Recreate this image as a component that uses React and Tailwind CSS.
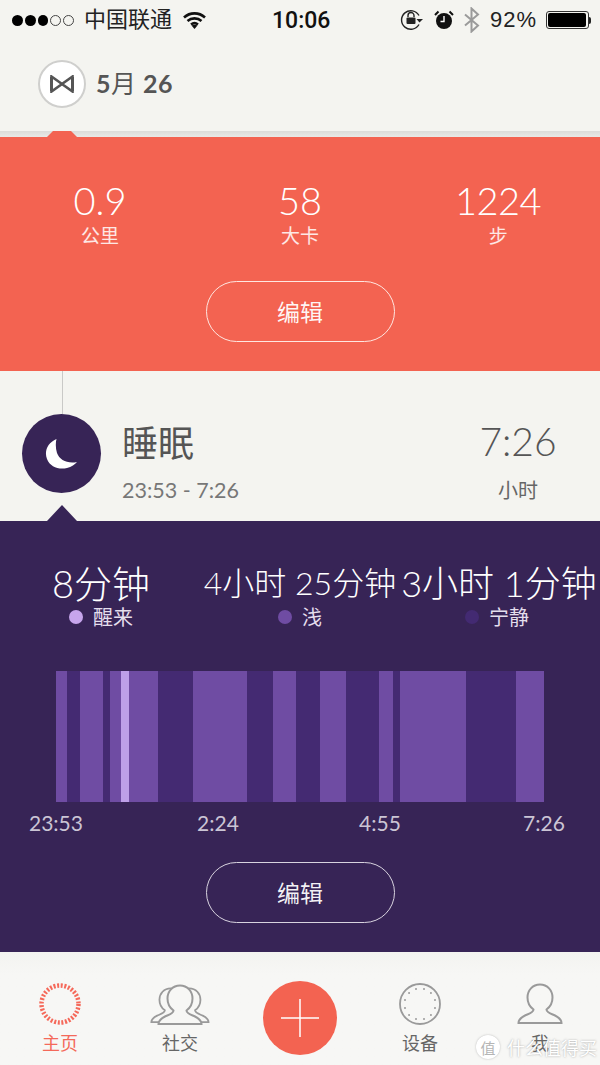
const LATIN = "font-['Lato','Noto_Sans_CJK_SC',sans-serif] font-light";

const segments = [
  { w: "w-[11px]", c: "bg-[#6f4ca3]" },
  { w: "w-[13px]", c: "bg-[#442a72]" },
  { w: "w-[23px]", c: "bg-[#6f4ca3]" },
  { w: "w-[7px]", c: "bg-[#442a72]" },
  { w: "w-[11px]", c: "bg-[#6f4ca3]" },
  { w: "w-[8px]", c: "bg-[#bd9fe8]" },
  { w: "w-[29px]", c: "bg-[#6f4ca3]" },
  { w: "w-[35px]", c: "bg-[#442a72]" },
  { w: "w-[54px]", c: "bg-[#6f4ca3]" },
  { w: "w-[26px]", c: "bg-[#442a72]" },
  { w: "w-[23px]", c: "bg-[#6f4ca3]" },
  { w: "w-[24px]", c: "bg-[#442a72]" },
  { w: "w-[26px]", c: "bg-[#6f4ca3]" },
  { w: "w-[33px]", c: "bg-[#442a72]" },
  { w: "w-[14px]", c: "bg-[#6f4ca3]" },
  { w: "w-[7px]", c: "bg-[#442a72]" },
  { w: "w-[66px]", c: "bg-[#6f4ca3]" },
  { w: "w-[50px]", c: "bg-[#442a72]" },
  { w: "w-[28px]", c: "bg-[#6f4ca3]" },
];

function StatusBar() {
  return (
    <div className="flex h-[40px] items-center text-[22px] text-[#222] font-['Liberation_Sans','Noto_Sans_CJK_SC',sans-serif]">
      <div className="ml-[12px] flex w-[62px] gap-[2px]">
        {[0, 1, 2].map((i) => (
          <span key={i} className="h-[11px] w-[11px] rounded-full bg-black" />
        ))}
        {[3, 4].map((i) => (
          <span key={i} className="h-[11px] w-[11px] rounded-full border border-[#444]" />
        ))}
      </div>
      <span className="ml-[10px] w-[88px] whitespace-nowrap leading-none">中国联通</span>
      <svg className="ml-[11px]" width="23" height="18" viewBox="0 0 23 18" fill="none" stroke="#111" strokeWidth="2.6">
        <path d="M1 6.5C7 1 16 1 22 6.5" />
        <path d="M4.5 10C8.5 6.5 14.5 6.5 18.5 10" />
        <path d="M8 13.5C10 12 13 12 15 13.5" />
        <path d="M11.5 18l-3-3.4c2-1.2 4-1.2 6 0z" fill="#111" stroke="none" />
      </svg>
      <span className="ml-[66px] w-[56px] text-[23px] font-medium leading-none text-[#111] font-['Roboto',sans-serif]">10:06</span>
      <svg className="ml-[72px]" width="23" height="22" viewBox="0 0 23 22" fill="none" stroke="#222" strokeWidth="1.4">
        <path d="M19 6.5A9.3 9.3 0 1 0 19 15.5" />
        <path d="M23 10l-3.500 3.500L16.500 10z" fill="#222" stroke="none" />
        <path d="M8 8V6.500a3 3 0 0 1 6 0V8" />
        <rect x="6.500" y="8.500" width="9" height="6.500" rx="1" fill="#222" stroke="none" />
      </svg>
      <svg className="ml-[11px]" width="20" height="20" viewBox="0 0 20 20">
        <circle cx="10" cy="11" r="8" fill="#111" />
        <path d="M10 6v5.500H6.500" fill="none" stroke="#fff" strokeWidth="1.4" />
        <path d="M1 5l3.500-3.500M19 5l-3.500-3.500" stroke="#111" strokeWidth="2" />
      </svg>
      <svg className="ml-[10px]" width="16" height="26" viewBox="0 0 16 26" fill="none" stroke="#9a9a9a" strokeWidth="2">
        <path d="M1 7.500l13 11-6.500 6V1.500l6.500 6-13 11" />
      </svg>
      <span className="ml-[10px] w-[48px] whitespace-nowrap leading-none tracking-[1px]">92%</span>
      <div className="ml-[8px] flex items-center">
        <div className="h-[18px] w-[43px] rounded-[3px] border border-[#333] p-[1px]">
          <div className="h-full w-[38px] rounded-[2px] bg-black" />
        </div>
        <span className="h-[7px] w-[2px] rounded-r-[2px] bg-[#222]" />
      </div>
    </div>
  );
}

function EditButton({ border }) {
  return (
    <button className={`flex h-[61px] w-[189px] items-center justify-center rounded-full border-[1.5px] bg-transparent text-[23px] text-white/95 font-['Noto_Sans_CJK_SC',sans-serif] ${border}`}>
      编辑
    </button>
  );
}

function Stat({ value, label, className = "" }) {
  return (
    <div className={`flex flex-col items-center text-white ${className}`}>
      <span className={`text-[38px] leading-[46px] ${LATIN}`}>{value}</span>
      <span className="text-[19px] leading-[24px] text-white/85 font-['Noto_Sans_CJK_SC',sans-serif]">{label}</span>
    </div>
  );
}

function SleepStat({ width, size, value, dot, label, rowClass = "" }) {
  return (
    <div className={`flex flex-col items-center ${width}`}>
      <span className={`whitespace-nowrap leading-[44px] ${size} ${LATIN}`}>{value}</span>
      <div className={`flex items-center ${rowClass}`}>
        <span className={`h-[14px] w-[14px] rounded-full ${dot}`} />
        <span className="ml-[10px] text-[20px] leading-[24px] text-[#e4deed]">{label}</span>
      </div>
    </div>
  );
}

function Tab({ label, color, children }) {
  return (
    <div className="flex flex-col items-center">
      <div className="flex h-[46px] items-center justify-center">{children}</div>
      <span className={`mt-[3px] text-[18px] leading-[24px] font-['Noto_Sans_CJK_SC',sans-serif] ${color}`}>{label}</span>
    </div>
  );
}

const PERSON = "M23 1.500C15.500 1.500 10.500 7.500 10.500 14.500C10.500 20 13 24 16.500 26.500C16.500 29.500 12.500 30.500 8 32.500C4 34.500 1.500 36.500 1.500 40H44.500C44.500 36.500 42 34.500 38 32.500C33.500 30.500 29.500 29.500 29.500 26.500C33 24 35.500 20 35.500 14.500C35.500 7.500 30.500 1.500 23 1.500Z";

const dots = Array.from({ length: 12 }, (_, i) => {
  const a = (i * Math.PI) / 6 + Math.PI / 12;
  return { cx: 21 + 15.500 * Math.cos(a), cy: 21 + 15.500 * Math.sin(a) };
});

export default function App() {
  return (
    <div className="relative h-[1065px] w-[600px] overflow-hidden bg-[#f4f4f0] font-['Noto_Sans_CJK_SC',sans-serif]">
      <StatusBar />

      {/* Date header */}
      <div className="flex h-[91px] items-start pl-[38px] pt-[20px]">
        <div className="flex h-[48px] w-[48px] items-center justify-center rounded-full border-2 border-[#cfcfcd] bg-white">
          <svg width="24" height="18" viewBox="0 0 24 18" fill="none" stroke="#555">
            <path d="M1.500 1.500L12 9L1.500 16.500Z" strokeWidth="2.600" />
            <path d="M22.500 1.500L12 9L22.500 16.500Z" strokeWidth="2.600" />
            <path d="M1.500 2V16M22.500 2V16" strokeWidth="3" />
          </svg>
        </div>
        <span className="ml-[10px] mt-[5px] text-[25px] font-bold leading-[36px] tracking-[0.5px] text-[#555] font-['Lato','Noto_Sans_CJK_SC',sans-serif]">
          5<span className="font-normal">月</span> 26
        </span>
      </div>

      {/* Activity card */}
      <div className="h-[6px] bg-gradient-to-b from-[#dcdcd9] to-[#e9e9e6]" />
      <div className="relative h-[234px] bg-[#f36351]">
        <div className="absolute left-[47px] top-[-6px] h-[6px] w-[30px] bg-[#f36351] [clip-path:polygon(20%_0,80%_0,100%_100%,0_100%)]" />
        <div className="grid grid-cols-3 pt-[40px]">
          <Stat value="0.9" label="公里" />
          <Stat value="58" label="大卡" />
          <Stat value="1224" label="步" className="pr-[4px] tracking-[-0.5px]" />
        </div>
        <div className="mt-[34px] flex justify-center">
          <EditButton border="border-[#ffe6e0]" />
        </div>
      </div>

      {/* Sleep summary */}
      <div className="relative flex h-[150px] bg-[#f4f4f0]">
        <div className="absolute left-[62px] top-0 h-[43px] w-px bg-[#c9c9c7]" />
        <div className="ml-[22px] mt-[43px] flex h-[79px] w-[79px] items-center justify-center rounded-full bg-[#372456]">
          <svg width="34" height="32" viewBox="0 0 34 32">
            <path d="M11.500 1C2.500 5 -1 13 2 21C5 29 14 32 22 30C26.500 29 30 26.500 32 24C22.500 26 14.500 22 12 15C10.500 10 10.500 5 11.500 1Z" fill="#fff" />
          </svg>
        </div>
        <div className="ml-[21px] mt-[47px]">
          <div className="text-[36px] leading-[46px] text-[#555]">睡眠</div>
          <div className={`mt-[12px] text-[21.500px] leading-[28px] text-[#777] ${LATIN} font-normal`}>23:53 - 7:26</div>
        </div>
        <div className="ml-auto mr-[40px] mt-[47px] flex w-[84px] flex-col items-center">
          <div className={`text-[39px] leading-[46px] text-[#555] ${LATIN}`}>7:26</div>
          <div className="mt-[12px] text-[20px] leading-[28px] text-[#666]">小时</div>
        </div>
        <div className="absolute bottom-0 left-[47px] h-[16px] w-[30px] bg-[#372456] [clip-path:polygon(50%_0,100%_100%,0_100%)]" />
      </div>

      {/* Sleep detail */}
      <div className="h-[431px] bg-[#372456] text-white">
        <div className="flex h-[122px] pt-[40px]">
          <SleepStat width="w-[202px]" size="text-[38px]" value="8分钟" dot="bg-[#c7a5ec]" label="醒来" />
          <SleepStat width="w-[196px]" size="text-[32px]" value="4小时 25分钟" dot="bg-[#6f4ca3]" label="浅" />
          <SleepStat width="w-[202px]" size="text-[36px]" value="3小时 1分钟" dot="bg-[#432a72]" label="宁静" rowClass="-ml-[4px]" />
        </div>

        <div className="ml-[56px] mt-[28px] flex h-[131px] w-[488px]">
          {segments.map((s, i) => (
            <div key={i} className={`h-full ${s.w} ${s.c}`} />
          ))}
        </div>

        <div className={`mt-[7px] flex gap-[54px] pl-[2px] text-[21px] leading-[28px] text-[#cbc5d5] ${LATIN} font-normal`}>
          {["23:53", "2:24", "4:55", "7:26"].map((t) => (
            <span key={t} className="w-[108px] text-center last:ml-[2px]">{t}</span>
          ))}
        </div>

        <div className="mt-[25px] flex justify-center">
          <EditButton border="border-[#d8d3df]" />
        </div>
      </div>

      {/* Tab bar */}
      <div className="grid h-[113px] grid-cols-5 bg-gradient-to-b from-[#f3f3f0] to-[#f7f7f5] to-20% pt-[29px]">
        <Tab label="主页" color="text-[#f4695a]">
          <svg width="42" height="42" viewBox="0 0 42 42" fill="none">
            <circle cx="21" cy="21" r="18.500" stroke="#f5695a" strokeWidth="4.500" strokeDasharray="2 1.640" />
          </svg>
        </Tab>
        <Tab label="社交" color="text-[#666]">
          <svg width="60" height="41" viewBox="0 0 60 41" fill="none" stroke="#9a9a9a" strokeWidth="2">
            <path transform="translate(0 3) scale(0.9 0.88)" d={PERSON} />
            <path transform="translate(18.500 3) scale(0.9 0.88)" d={PERSON} />
            <path transform="translate(7 0)" fill="#f7f7f5" d={PERSON} />
          </svg>
        </Tab>
        <div className="flex justify-center">
          <div className="flex h-[74px] w-[74px] items-center justify-center rounded-full bg-[#f36351]">
            <svg width="40" height="40" viewBox="0 0 40 40" stroke="#fff" strokeWidth="1.500">
              <path d="M20 1V39M1 20H39" />
            </svg>
          </div>
        </div>
        <Tab label="设备" color="text-[#666]">
          <svg width="42" height="42" viewBox="0 0 42 42" fill="none">
            <circle cx="21" cy="21" r="20" stroke="#9a9a9a" strokeWidth="1.800" />
            {dots.map((d, i) => (
              <circle key={i} cx={d.cx} cy={d.cy} r="1" fill="#9a9a9a" />
            ))}
          </svg>
        </Tab>
        <Tab label="我" color="text-[#666]">
          <svg width="46" height="42" viewBox="0 0 46 42" fill="none" stroke="#9a9a9a" strokeWidth="2">
            <path d={PERSON} />
          </svg>
        </Tab>
      </div>

      {/* Watermark */}
      <div className="absolute bottom-[3px] left-[476px] flex items-center text-white [text-shadow:0_0_2px_rgba(120,120,120,0.7)]">
        <span className="flex h-[24px] w-[24px] items-center justify-center rounded-full bg-white text-[15px] leading-none text-[#b5b5b5] [text-shadow:none] shadow-[0_0_2px_rgba(120,120,120,0.5)]">值</span>
        <span className="ml-[7px] whitespace-nowrap text-[18px] leading-[30px]">什么值得买</span>
      </div>
    </div>
  );
}
